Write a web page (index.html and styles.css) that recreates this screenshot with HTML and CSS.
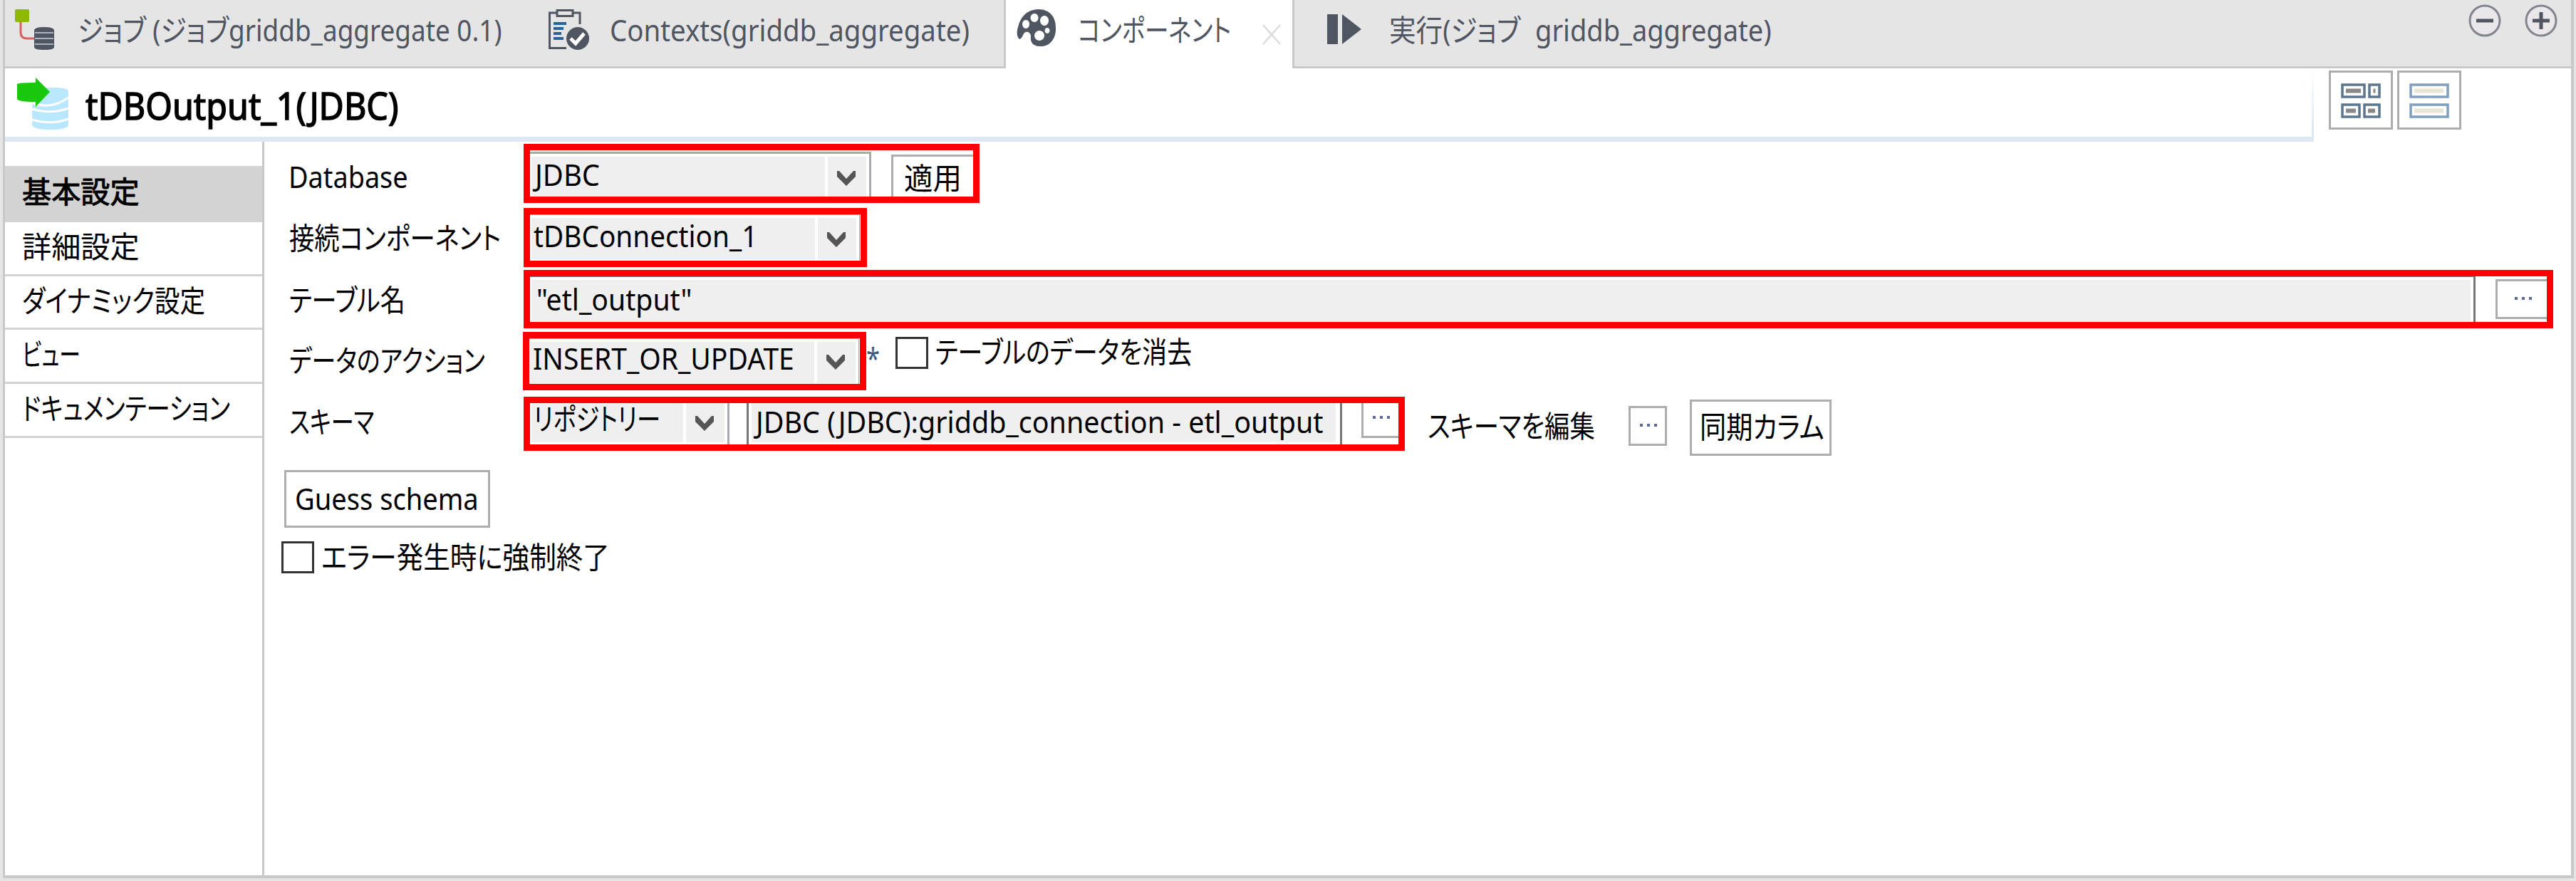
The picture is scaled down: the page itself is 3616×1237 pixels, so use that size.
FILE: index.html
```html
<!DOCTYPE html>
<html lang="ja">
<head>
<meta charset="utf-8">
<title>tDBOutput_1(JDBC)</title>
<link rel="stylesheet" href="styles.css">
</head>
<body>
<div class="view">
  <header class="tabs">
    <div class="tab tab-job">
      <svg class="icon-job" width="56" height="58" viewBox="0 0 56 58"><path d="M8 18V32Q8 41 17 41H29" fill="none" stroke="#d9605f" stroke-width="3"/><rect width="20" height="18" rx="2" fill="#8dba00"/><path d="M27 30Q27 25 41 25T55 30V53Q55 57 41 57T27 53Z" fill="#4f5561"/><path d="M28 33H54M28 41H54M28 49H54" stroke="#aeb1b6" stroke-width="2"/></svg>
      <span class="t t-job">ジョブ (ジョブgriddb_aggregate 0.1)</span>
    </div>
    <div class="tab tab-contexts">
      <svg class="icon-ctx" width="57" height="58" viewBox="0 0 57 58"><path d="M25 54.500H1.500V5H12M34 5H44V21" fill="none" stroke="#4f5561" stroke-width="3"/><rect x="12" y="1.500" width="22" height="8" fill="none" stroke="#4f5561" stroke-width="3"/><path d="M7 20H25M7 27H21M7 34H18M7 41H21" stroke="#2a6496" stroke-width="4"/><ellipse cx="41" cy="41" rx="16" ry="16" fill="#4f5561"/><path d="M31 41L38 48L50 34" fill="none" stroke="#fff" stroke-width="5"/></svg>
      <span class="t t-contexts">Contexts(griddb_aggregate)</span>
    </div>
    <div class="tab tab-active">
      <svg class="icon-palette" width="56" height="53" viewBox="0 0 56 53"><path fill="#4f5561" fill-rule="evenodd" d="M31 0C47 0 56 12 55 28C55 42 46 53 33 52C22 52 19 45 20 38C20 33 15 30 11 33C8 36 9 40 4 42C0 38 0 32 2 25C6 9 16 0 31 0ZM25 6a5.500 6 0 1 0 .1 0ZM39 9a6 7 0 1 0 .1 0ZM13 15a5 6 0 1 0 .1 0ZM43 26a3.500 4 0 1 0 .1 0ZM32 30a7 7 0 1 0 .1 0Z"/></svg>
      <span class="t t-component">コンポーネント</span>
      <svg class="icon-close" width="26" height="29" viewBox="0 0 26 29"><path d="M1 1L25 28M25 1L1 28" stroke="#dcdcdc" stroke-width="2.500"/></svg>
    </div>
    <div class="tab tab-run">
      <svg class="icon-run" width="49" height="42" viewBox="0 0 49 42"><path d="M0 0H15V42H0ZM21 0L48 21L21 42Z" fill="#4f5561"/></svg>
      <span class="t t-run">実行(ジョブ</span>
      <span class="t t-runname">griddb_aggregate)</span>
      <div class="window-tools">
        <svg width="46" height="46" viewBox="0 0 46 46"><circle cx="23" cy="23" r="21" fill="#e9e7ea" stroke="#83858e" stroke-width="3"/><path d="M11 23H35" stroke="#4f5561" stroke-width="5"/></svg>
        <svg width="46" height="46" viewBox="0 0 46 46"><circle cx="23" cy="23" r="21" fill="#e9e7ea" stroke="#83858e" stroke-width="3"/><path d="M11 23H35M23 11V35" stroke="#4f5561" stroke-width="5"/></svg>
      </div>
    </div>
  </header>
  <div class="head">
    <div class="headline">
      <svg class="icon-db" width="74" height="76" viewBox="0 0 74 76"><path fill="#b9e7ff" d="M21 24Q21 14 47 14Q72 14 72 19V66Q72 73 47 73T21 66Z"/><path d="M21 35Q47 46 72 28M21 44Q47 52 72 43M21 59Q47 67 72 58" fill="none" stroke="#fff" stroke-width="3"/><path fill="#18c80c" d="M0 9Q2 7 26 7V0L46 20L26 41V34Q2 34 0 30Z"/></svg>
      <h1 class="t t-title">tDBOutput_1(JDBC)</h1>
    </div>
    <button class="layout-button"><svg width="56" height="49" viewBox="0 0 56 49"><path d="M2 2H33V19H2ZM40 2H54V19H40ZM2 30H26V47H2ZM33 30H54V47H33Z" fill="none" stroke="#5b7690" stroke-width="3.500"/><path d="M7 10.500H28M45.500 10.500H48.500M7 38.500H21M38 38.500H48" stroke="#888" stroke-width="6"/></svg></button>
    <button class="layout-button"><svg width="56" height="49" viewBox="0 0 56 49"><path d="M2 2H54V19H2ZM2 30H54V47H2Z" fill="none" stroke="#7f9fbf" stroke-width="3.500"/><path d="M7 10.500H48M7 38.500H48" stroke="#e8e5d5" stroke-width="6"/></svg></button>
  </div>
  <div class="body">
    <nav class="side">
      <div class="side-item selected"><span class="t t-basic">基本設定</span></div>
      <div class="side-item"><span class="t t-advanced">詳細設定</span></div>
      <div class="side-item"><span class="t t-dynamic">ダイナミック設定</span></div>
      <div class="side-item"><span class="t t-view">ビュー</span></div>
      <div class="side-item"><span class="t t-doc">ドキュメンテーション</span></div>
    </nav>
    <main class="form">
      <div class="row row-db">
        <div class="label"><span class="t t-database">Database</span></div>
        <div class="frame frame-db">
          <div class="combo combo-db"><div class="value"><span class="t t-jdbc">JDBC</span></div><div class="drop"><svg width="26" height="21" viewBox="0 0 26 21"><path d="M0 0H3L13 11L23 0H26V8L13 21L0 8Z" fill="#555"/></svg></div></div>
          <button class="apply"><span class="t t-apply">適用</span></button>
        </div>
      </div>
      <div class="row row-conn">
        <div class="label"><span class="t t-conn">接続コンポーネント</span></div>
        <div class="frame frame-conn">
          <div class="combo"><div class="value"><span class="t t-connvalue">tDBConnection_1</span></div><div class="drop"><svg width="26" height="21" viewBox="0 0 26 21"><path d="M0 0H3L13 11L23 0H26V8L13 21L0 8Z" fill="#555"/></svg></div></div>
        </div>
      </div>
      <div class="row row-table">
        <div class="label"><span class="t t-table">テーブル名</span></div>
        <div class="frame frame-table">
          <div class="input input-table"><div class="value"><span class="t t-tablevalue">"etl_output"</span></div></div>
          <button class="more more-table"><i></i><i></i><i></i></button>
        </div>
      </div>
      <div class="row row-action">
        <div class="label"><span class="t t-action">データのアクション</span></div>
        <div class="frame frame-action">
          <div class="combo"><div class="value"><span class="t t-actionvalue">INSERT_OR_UPDATE</span></div><div class="drop"><svg width="26" height="21" viewBox="0 0 26 21"><path d="M0 0H3L13 11L23 0H26V8L13 21L0 8Z" fill="#555"/></svg></div></div>
        </div>
        <span class="t t-star">*</span>
        <div class="check check-clear"></div>
        <span class="t t-clear">テーブルのデータを消去</span>
      </div>
      <div class="row row-schema">
        <div class="label"><span class="t t-schema">スキーマ</span></div>
        <div class="frame frame-schema">
          <div class="combo combo-repo"><div class="value"><span class="t t-repo">リポジトリー</span></div><div class="drop"><svg width="26" height="21" viewBox="0 0 26 21"><path d="M0 0H3L13 11L23 0H26V8L13 21L0 8Z" fill="#555"/></svg></div></div>
          <div class="input input-schema"><div class="value"><span class="t t-schemavalue">JDBC (JDBC):griddb_connection - etl_output</span></div></div>
          <button class="more more-schema"><i></i><i></i><i></i></button>
        </div>
        <span class="t t-edit">スキーマを編集</span>
        <button class="more more-edit"><i></i><i></i><i></i></button>
        <button class="sync"><span class="t t-sync">同期カラム</span></button>
      </div>
      <div class="row row-guess"><button class="guess"><span class="t t-guess">Guess schema</span></button></div>
      <div class="row row-die"><div class="check"></div><span class="t t-die">エラー発生時に強制終了</span></div>
    </main>
  </div>
</div>
</body>
</html>
```
FILE: styles.css
```css
* { box-sizing: border-box; }
body {
  margin: 0;
  width: 3616px;
  height: 1237px;
  background: #e5e5e5;
  font: 42px/60px "Noto Sans", "Noto Sans CJK JP", sans-serif;
  font-feature-settings: "palt";
  color: #000;
}
button { padding: 0; font: inherit; font-feature-settings: inherit; color: inherit; background: #fff; border: 3px solid #adadad; display: flex; flex: none; }
svg { display: block; flex: none; }
.view {
  display: flex; flex-direction: column;
  width: 3609px; height: 1233px; margin-left: 4px;
  border: solid #c9c9c9; border-width: 0 4px 4px 3px;
  background: #fff;
}
/* Labels are condensed horizontally; width is the condensed width */
.t { display: block; flex: none; height: 60px; white-space: nowrap; transform-origin: 0 0; font-weight: 400; margin: 0; text-align: left; }

.tabs { display: flex; height: 96px; flex: none; color: #4f5561; }
.tab { display: flex; background: #e5e5e5; border-bottom: 3px solid #c9c9c9; }
.tab .t { margin-top: 12px; }
.tab-job { width: 753px; padding-left: 14px; }
.icon-job { margin: 13px 32px 0 0; }
.t-job { width: 596px; transform: scaleX(.878); }
.tab-contexts { width: 652px; padding-left: 10px; border-right: 3px solid #c9c9c9; }
.icon-ctx { margin: 13px 29px 0 0; }
.t-contexts { width: 505px; transform: scaleX(.914); }
.tab-active { width: 402px; padding-left: 15px; background: #fff; border-bottom: 0; }
.icon-palette { margin: 13px 30px 0 0; }
.t-component { width: 215px; transform: scaleX(.8); }
.icon-close { margin: 34px 0 0 44px; }
.tab-run { flex: 1; padding-left: 46px; border-left: 3px solid #c9c9c9; }
.icon-run { margin: 20px 38px 0 0; }
.t-run { width: 184px; transform: scaleX(.895); }
.t-runname { width: 331px; margin-left: 21px; transform: scaleX(.905); }
.window-tools { display: flex; gap: 33px; margin: 6px 19px 0 auto; }

.head { display: flex; height: 103px; flex: none; }
.headline {
  display: flex; width: 3241px; margin-right: 21px; padding-left: 17px;
  border: solid #dfe8f2; border-width: 0 3px 7px 0;
  border-image: linear-gradient(to bottom, #fff, #dfe8f2 80%) 0 3 7 0;
}
.icon-db { margin: 13px 22px 0 0; }
.t-title { width: 444px; font-size: 52px; line-height: 80px; height: 80px; margin-top: 12px; transform: scaleX(.93); -webkit-text-stroke: 1.5px #000; }
.layout-button { width: 90px; height: 83px; margin: 3px 6px 0 0; padding: 15px 0 0 14px; }

.body { display: flex; flex: 1; }
.side { width: 364px; flex: none; border-right: 3px solid #c9c9c9; padding-top: 34px; }
.side-item { height: 75.7px; border-bottom: 3px solid #d3d3d3; padding: 4px 0 0 24px; }
.side-item.selected { height: 79px; background: #d3d3d3; padding-top: 6px; -webkit-text-stroke: 1px #000; }
.t-basic, .t-advanced { width: 164px; transform: scaleX(.98); }
.t-dynamic { width: 256px; transform: scaleX(.845); }
.t-view { width: 80px; transform: scaleX(.71); }
.t-doc { width: 289px; transform: scaleX(.793); }

.form { flex: 1; min-width: 0; }
.row { display: flex; }
.label { width: 364px; padding-left: 35px; flex: none; }
.row-db { height: 90px; padding-top: 3px; }
.row-conn { height: 87px; padding-top: 3px; }
.row-table { height: 87px; padding-top: 3px; }
.row-action { height: 91px; padding-top: 3px; }
.row-schema { height: 102px; padding-top: 3px; }
.row-db .label { padding-top: 16px; padding-left: 34px; }
.row-conn .label { padding-top: 12px; }
.row-table .label { padding-top: 12px; }
.row-action .label { padding-top: 10px; width: 363px; }
.row-schema .label { padding-top: 5px; }
.t-database { width: 166px; transform: scaleX(.9); }
.t-conn { width: 295px; transform: scaleX(.842); }
.t-table { width: 162px; transform: scaleX(.835); }
.t-action { width: 273px; transform: scaleX(.808); }
.t-schema { width: 118px; transform: scaleX(.765); }

.frame { display: flex; flex: none; border: 9px solid #f00; overflow: hidden; }
.frame-db { width: 640px; height: 83px; }
.frame-conn { width: 482px; height: 83px; }
.frame-table { width: 2849px; height: 82px; }
.frame-action { width: 482px; height: 82px; }
.frame-schema { width: 1237px; height: 76px; }
.combo, .input { display: flex; flex: none; padding: 4px 0 0 2px; border: solid #a9a9af; border-width: 1px 1px 0 0; }
.combo { width: 463px; gap: 4px; }
.value { height: 58px; background: #efefef; flex: none; width: 398px; padding-left: 3px; }
.drop { height: 58px; background: #efefef; width: 54px; padding: 20px 0 0 13px; }
.value .t { margin-top: -5px; }
.combo-db { width: 479px; margin-top: 2px; border-width: 3px 3px 0 0; }
.combo-db .value { width: 412px; padding-left: 5px; }
.t-jdbc { width: 91px; transform: scaleX(.948); }
.apply { width: 120px; height: 70px; margin: 6px 0 0 28px; padding-left: 15px; }
.t-apply { width: 80px; transform: scaleX(.965); }
.t-connvalue { width: 313px; transform: scaleX(.922); }
.input-table { width: 2731px; border-color: #777; border-width: 1px 3px 0 0; }
.input-table .value { width: 2722px; padding-left: 7px; }
.input-table .t { margin-top: -3px; }
.t-tablevalue { width: 218px; transform: scaleX(.932); }
.more { width: 54px; height: 56px; gap: 6px; padding: 22px 0 0 13px; }
.more i { width: 4px; height: 4px; background: #5a6a9a; flex: none; }
.more-table { width: 90px; margin: 4px 0 0 28px; padding-left: 24px; }
.frame-action .drop { padding-top: 18px; }
.frame-action .t { margin-top: -7px; }
.t-actionvalue { width: 365px; transform: scaleX(.929); }
.t-star { width: 16px; color: #3a5a80; margin-top: 7px; transform: scaleX(.82); }
.check { width: 46px; height: 45px; border: 3px solid #333; flex: none; }
.check-clear { margin: 7px 0 0 25px; }
.t-clear { width: 358px; margin: -2px 0 0 10px; transform: scaleX(.83); }
.combo-repo { width: 280px; padding-top: 0; border-width: 0 3px 0 0; }
.combo-repo .value { width: 213px; height: 55px; }
.combo-repo .drop { height: 55px; padding-top: 18px; }
.combo-repo .t { margin-top: -8px; }
.t-repo { width: 176px; transform: scaleX(.795); }
.input-schema { width: 836px; margin-left: 24px; padding: 0 0 0 4px; border-color: #777; border-width: 0 3px; }
.input-schema .value { width: 820px; height: 55px; padding-left: 6px; }
.t-schemavalue { width: 796px; transform: scaleX(.938); }
.input-schema .t { margin-top: -4px; }
.more-schema { width: 60px; height: 58px; margin: -9px 0 0 27px; padding: 24px 0 0 13px; }
.t-edit { width: 234px; margin: 11px 0 0 32px; transform: scaleX(.842); }
.more-edit { margin: 13px 0 0 48px; }
.sync { width: 199px; height: 79px; margin: 4px 0 0 32px; padding: 5px 0 0 11px; }
.t-sync { width: 172px; transform: scaleX(.885); }
.row-guess { height: 103px; }
.guess { width: 289px; height: 81px; margin: 4px 0 0 28px; padding: 7px 0 0 12px; }
.t-guess { width: 256px; transform: scaleX(.907); }
.row-die { height: 60px; padding-left: 24px; }
.row-die .check { margin-top: 1px; }
.t-die { width: 402px; margin: -7px 0 0 10px; transform: scaleX(.895); }
```
